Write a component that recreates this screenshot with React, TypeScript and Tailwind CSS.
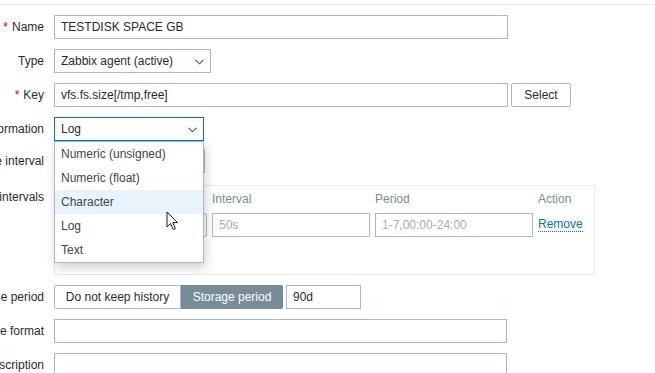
import React from "react";

const Chevron = () => (
  <svg width="9" height="6" viewBox="0 0 9 6" className="absolute right-[6px] top-[9px]">
    <path d="M0.5 0.8 L4.5 4.8 L8.5 0.8" fill="none" stroke="#4f5b62" strokeWidth="1.1" />
  </svg>
);

const Label = ({ children, req }: { children: React.ReactNode; req?: boolean }) => (
  <div className="w-[44px] shrink-0 flex justify-end whitespace-nowrap text-[#1f2c33]">
    {req && <span className="text-[#d40000] mr-[4px]">*</span>}
    {children}
  </div>
);

const inputCls =
  "h-[24px] border border-[#acbbc2] bg-white px-[6px] flex items-center text-[#1f2c33] whitespace-nowrap";

export default function App() {
  return (
    <div
      className="relative w-[655px] h-[373px] overflow-hidden bg-white text-[12px] leading-[14px]"
      style={{ fontFamily: '"Liberation Sans", Arial, sans-serif' }}
    >
      <div className="h-[4px]" />
      <div className="border-t border-[#e6eaed]" />
      <div className="flex flex-col mt-[10px]">
        <div className="flex items-center gap-[10px]">
          <Label req>Name</Label>
          <div className={inputCls + " w-[454px]"}>TESTDISK SPACE GB</div>
        </div>
        <div className="flex items-center gap-[10px] mt-[10px]">
          <Label>Type</Label>
          <div className={inputCls + " w-[157px] relative"}>
            Zabbix agent (active)
            <Chevron />
          </div>
        </div>
        <div className="flex items-center gap-[10px] mt-[10px]">
          <Label req>Key</Label>
          <div className="flex gap-[3px]">
            <div className={inputCls + " w-[454px]"}>vfs.fs.size[/tmp,free]</div>
            <div className="h-[24px] w-[60px] border border-[#acbbc2] rounded-[2px] bg-white flex items-center justify-center text-[#1f2c33]">
              Select
            </div>
          </div>
        </div>
        <div className="flex items-center gap-[10px] relative z-10 mt-[10px]">
          <Label>Type of information</Label>
          <div className="relative">
            <div className="h-[24px] w-[150px] border border-[#0275b8] bg-white px-[6px] flex items-center text-[#1f2c33] relative">
              Log
              <Chevron />
            </div>
            <div className="absolute left-0 top-[24px] w-[150px] border border-[#a9b6bc] bg-white shadow-[2px_5px_10px_rgba(0,0,0,0.18)] text-[#3b464c]">
              <div className="h-[24px] px-[6px] flex items-center">Numeric (unsigned)</div>
              <div className="h-[24px] px-[6px] flex items-center">Numeric (float)</div>
              <div className="h-[24px] px-[6px] flex items-center bg-[#e8f3fc]">Character</div>
              <div className="h-[24px] px-[6px] flex items-center">Log</div>
              <div className="h-[24px] px-[6px] flex items-center">Text</div>
            </div>
          </div>
        </div>
        <div className="flex items-center gap-[10px] mt-[8px]">
          <Label>Update interval</Label>
          <div className={inputCls + " w-[151px]"}>30s</div>
        </div>
        <div className="flex items-start gap-[10px] mt-[12px]">
          <div className="pt-[5px]">
            <Label>Custom intervals</Label>
          </div>
          <div className="w-[541px] h-[90px] border border-[#ebebeb] px-[5px] pt-[6px]">
            <div className="flex gap-[5px] text-[#768d99] h-[14px]">
              <div className="w-[147px]">Type</div>
              <div className="w-[158px]">Interval</div>
              <div className="w-[158px]">Period</div>
              <div>Action</div>
            </div>
            <div className="flex gap-[5px] mt-[7px] items-center">
              <div className="w-[147px] h-[24px] flex">
                <div className="flex-1 border border-[#acbbc2] rounded-l-[2px] bg-[#768d99] text-white flex items-center justify-center">
                  Flexible
                </div>
                <div className="flex-1 border border-l-0 border-[#acbbc2] rounded-r-[3px] bg-white flex items-center justify-center">
                  Scheduling
                </div>
              </div>
              <div className="h-[24px] w-[158px] border border-[#acbbc2] bg-white px-[6px] flex items-center text-[#a4adb2]">
                50s
              </div>
              <div className="h-[24px] w-[158px] border border-[#acbbc2] bg-white px-[6px] flex items-center text-[#a4adb2]">
                1-7,00:00-24:00
              </div>
              <div className="text-[#0275b8] border-b border-dotted border-[#0275b8] leading-[13px]">Remove</div>
            </div>
            <div className="mt-[7px] text-[#0275b8]">Add</div>
          </div>
        </div>
        <div className="flex items-center gap-[10px] mt-[10px]">
          <Label>History storage period</Label>
          <div className="flex items-center gap-[3px]">
            <div className="flex h-[24px]">
              <div className="w-[127px] border border-[#acbbc2] rounded-l-[2px] bg-white flex items-center justify-center text-[#1f2c33]">
                Do not keep history
              </div>
              <div className="w-[102px] bg-[#768d99] rounded-r-[2px] text-white flex items-center justify-center">
                Storage period
              </div>
            </div>
            <div className={inputCls + " w-[75px]"}>90d</div>
          </div>
        </div>
        <div className="flex items-center gap-[10px] mt-[10px]">
          <Label>Log time format</Label>
          <div className={inputCls + " w-[453px]"}></div>
        </div>
        <div className="flex items-start gap-[10px] mt-[10px]">
          <div className="pt-[5px]">
            <Label>Description</Label>
          </div>
          <div className="w-[453px] h-[60px] border border-[#acbbc2] bg-white"></div>
        </div>
      </div>
      <svg
        width="14"
        height="21"
        viewBox="0 0 14 21"
        className="absolute left-[166px] top-[211px] z-20"
      >
        <path
          d="M1 1 L1 16 L4.5 12.5 L7.2 18.6 L9.4 17.6 L6.8 11.6 L11.5 11.6 Z"
          fill="white"
          stroke="#1a1a1a"
          strokeWidth="1"
          strokeLinejoin="miter"
        />
      </svg>
    </div>
  );
}
